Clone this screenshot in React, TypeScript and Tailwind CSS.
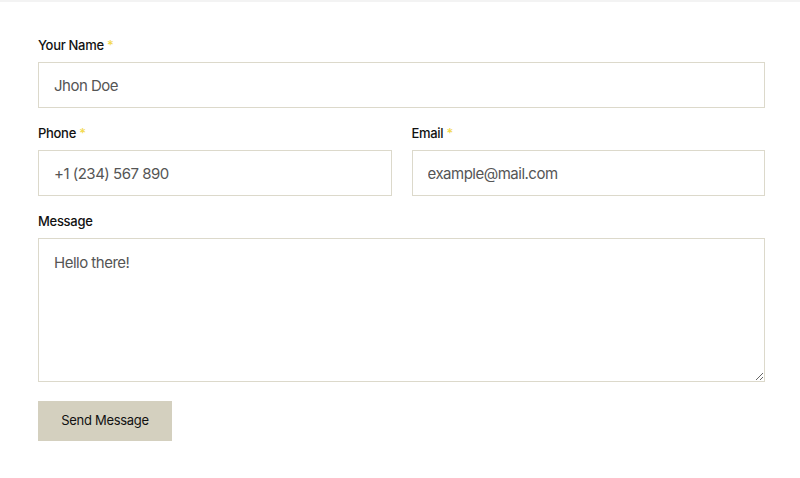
import React, { useState } from "react";

export default function App() {
  const [name, setName] = useState("Jhon Doe");
  const [phone, setPhone] = useState("+1 (234) 567 890");
  const [email, setEmail] = useState("example@mail.com");
  const [message, setMessage] = useState("Hello there!");

  const labelCls =
    "block text-[13px] leading-[17px] font-medium tracking-[-0.3px] text-[#111] mb-[8px]";
  const inputCls =
    "w-full h-[46px] px-[15px] bg-white border border-[#dcd9cb] text-[15px] tracking-[-0.5px] text-[#555] outline-none focus:border-[#bdb8a3]";

  return (
    <div className="min-h-[478px] bg-white border-t-[2px] border-[#f3f3f3] font-['Inter','Liberation_Sans',sans-serif]">
      <form
        onSubmit={(e) => e.preventDefault()}
        className="pl-[38px] pr-[35px] pt-[35px] flex flex-col"
      >
        {/* Name */}
        <div>
          <label className={labelCls}>
            Your Name <span className="text-[#f3d94e]">*</span>
          </label>
          <input className={inputCls} value={name} onChange={(e) => setName(e.target.value)} />
        </div>

        {/* Phone + Email */}
        <div className="grid grid-cols-2 gap-[20px] mt-[17px]">
          <div>
            <label className={labelCls}>
              Phone <span className="text-[#f3d94e]">*</span>
            </label>
            <input className={inputCls} value={phone} onChange={(e) => setPhone(e.target.value)} />
          </div>
          <div>
            <label className={labelCls}>
              Email <span className="text-[#f3d94e]">*</span>
            </label>
            <input className={inputCls} value={email} onChange={(e) => setEmail(e.target.value)} />
          </div>
        </div>

        {/* Message */}
        <div className="mt-[17px]">
          <label className={labelCls}>Message</label>
          <textarea
            className="block w-full h-[144px] px-[15px] py-[12px] bg-white border border-[#dcd9cb] text-[15px] leading-[24px] tracking-[-0.5px] text-[#555] outline-none focus:border-[#bdb8a3]"
            value={message}
            onChange={(e) => setMessage(e.target.value)}
          />
        </div>

        <div className="mt-[19px]">
          <button
            type="submit"
            className="w-[134px] h-[40px] bg-[#d4d0bf] text-[13px] tracking-[-0.3px] text-[#111] cursor-pointer"
          >
            Send Message
          </button>
        </div>
      </form>
    </div>
  );
}
